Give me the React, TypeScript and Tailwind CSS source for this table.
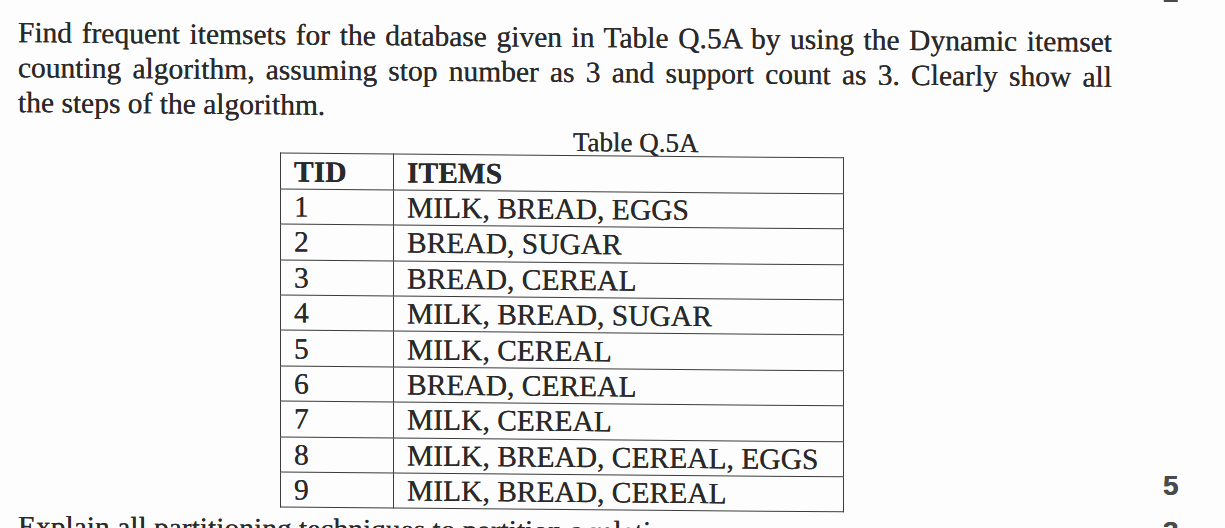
const rows: [string, string][] = [
  ["1", "MILK, BREAD, EGGS"],
  ["2", "BREAD, SUGAR"],
  ["3", "BREAD, CEREAL"],
  ["4", "MILK, BREAD, SUGAR"],
  ["5", "MILK, CEREAL"],
  ["6", "BREAD, CEREAL"],
  ["7", "MILK, CEREAL"],
  ["8", "MILK, BREAD, CEREAL, EGGS"],
  ["9", "MILK, BREAD, CEREAL"],
];

export default function App() {
  return (
    <div className="flex h-[528px] w-[1225px] overflow-hidden bg-[#fdfdfd] font-['Liberation_Serif',serif] text-[#2a2a2a] [text-shadow:0_0_0.5px_#2a2a2a]">
      {/* question body, slightly skewed like the scan */}
      <div className="w-[1150px] shrink-0 origin-top-left skew-y-[0.5deg] pl-[18px] pt-[15.4px]">
        <p className="w-[1094px] text-[29.5px] leading-[35px]">
          <span className="block whitespace-nowrap text-justify [text-align-last:justify]">
            Find frequent itemsets for the database given in Table Q.5A by using the Dynamic itemset
          </span>
          <span className="block whitespace-nowrap text-justify [text-align-last:justify]">
            counting algorithm, assuming stop number as 3 and support count as 3. Clearly show all
          </span>
          <span className="block">the steps of the algorithm.</span>
        </p>

        <div className="ml-[555px] mt-[2px] text-[27px] leading-[30px]">Table Q.5A</div>

        <table className="-mt-[2px] ml-[262px] w-[564px] border-collapse text-[29.5px] leading-[34px]">
          <thead>
            <tr className="h-[35.4px]">
              <th className="w-[113px] border-[1.5px] border-[#3c3c3c] p-0 pl-[13px] text-left font-bold">TID</th>
              <th className="border-[1.5px] border-[#3c3c3c] p-0 pl-[13px] text-left font-bold">ITEMS</th>
            </tr>
          </thead>
          <tbody>
            {rows.map(([tid, items]) => (
              <tr key={tid} className="h-[35.4px]">
                <td className="border-[1.5px] border-[#3c3c3c] p-0 pl-[13px]">{tid}</td>
                <td className="border-[1.5px] border-[#3c3c3c] p-0 pl-[13px]">{items}</td>
              </tr>
            ))}
          </tbody>
        </table>

        <p className="mt-[4px] text-[29.5px] leading-[35px]">
          Explain all partitioning techniques to partition a relation.
        </p>
      </div>

      {/* marks column */}
      <div className="flex flex-col items-start pl-[13px] font-['Liberation_Sans',Arial,sans-serif] text-[28px] font-bold leading-[28px] text-[#4a4a4a]">
        <span className="-mt-[21px]">2</span>
        <span className="mt-[465px]">5</span>
        <span className="mt-[18px]">3</span>
      </div>
    </div>
  );
}
